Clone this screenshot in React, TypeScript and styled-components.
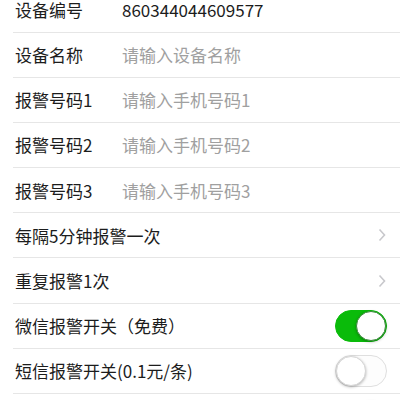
import styled, { createGlobalStyle } from "styled-components";

const GlobalStyle = createGlobalStyle`
	html, body {
		margin: 0;
		padding: 0;
		background: #fff;
		overflow: hidden;
	}
	body {
		font-family: "Noto Sans CJK SC", "Noto Sans", sans-serif;
	}
`;

type Row =
	| { kind: "input"; label: string; value?: string; placeholder?: string }
	| { kind: "link"; label: string }
	| { kind: "switch"; label: string; on: boolean };

const rows: Row[] = [
	{ kind: "input", label: "设备编号", value: "860344044609577" },
	{ kind: "input", label: "设备名称", placeholder: "请输入设备名称" },
	{ kind: "input", label: "报警号码1", placeholder: "请输入手机号码1" },
	{ kind: "input", label: "报警号码2", placeholder: "请输入手机号码2" },
	{ kind: "input", label: "报警号码3", placeholder: "请输入手机号码3" },
	{ kind: "link", label: "每隔5分钟报警一次" },
	{ kind: "link", label: "重复报警1次" },
	{ kind: "switch", label: "微信报警开关（免费）", on: true },
	{ kind: "switch", label: "短信报警开关(0.1元/条)", on: false },
	{ kind: "switch", label: "", on: true },
];

export default function App() {
	return (
		<>
			<GlobalStyle />
			<List>
				{rows.map((row, i) => (
					<Cell key={i}>
						<Label $wide={row.kind !== "input"}>{row.label}</Label>
						{row.kind === "input" && (
							<Value $placeholder={!row.value}>
								{row.value ?? row.placeholder}
							</Value>
						)}
						{row.kind === "link" && (
							<Arrow>
								<svg width="8" height="14" viewBox="0 0 8 14">
									<path
										d="M1.5 1.5 L6.5 7 L1.5 12.5"
										fill="none"
										stroke="#c8c8cc"
										strokeWidth="1.6"
									/>
								</svg>
							</Arrow>
						)}
						{row.kind === "switch" && (
							<Switch $on={row.on}>
								<Knob $on={row.on} />
							</Switch>
						)}
					</Cell>
				))}
			</List>
		</>
	);
}

const List = styled.div`
	margin-top: -12.7px;
	display: flex;
	flex-direction: column;
`;

const Cell = styled.div`
	height: 44.2px;
	flex: none;
	margin-left: 13px;
	padding: 0 13px 0 2px;
	border-bottom: 1px solid #e6e6e6;
	display: flex;
	align-items: center;
	font-size: 17px;
	color: #1c1c1c;
`;

const Label = styled.div<{ $wide: boolean }>`
	width: ${(p) => (p.$wide ? "auto" : "107px")};
	flex: ${(p) => (p.$wide ? "1" : "none")};
	white-space: nowrap;
`;

const Value = styled.div<{ $placeholder: boolean }>`
	flex: 1;
	color: ${(p) => (p.$placeholder ? "#a0a0a0" : "#1c1c1c")};
	white-space: nowrap;
`;

const Arrow = styled.div`
	display: flex;
	align-items: center;
	margin-right: 1px;
`;

const Switch = styled.div<{ $on: boolean }>`
	width: 52px;
	height: 32px;
	box-sizing: border-box;
	border-radius: 16px;
	border: 1px solid ${(p) => (p.$on ? "#0abb0a" : "#dfdfdf")};
	background: ${(p) => (p.$on ? "#0abb0a" : "#fdfdfd")};
	display: flex;
	justify-content: ${(p) => (p.$on ? "flex-end" : "flex-start")};
	align-items: center;
`;

const Knob = styled.div<{ $on: boolean }>`
	width: 30px;
	height: 30px;
	box-sizing: border-box;
	border-radius: 50%;
	background: #fff;
	border: 1px solid ${(p) => (p.$on ? "#3c8a3c" : "#d6d6d6")};
	box-shadow: 0 1px 3px rgba(0, 0, 0, 0.3);
`;
